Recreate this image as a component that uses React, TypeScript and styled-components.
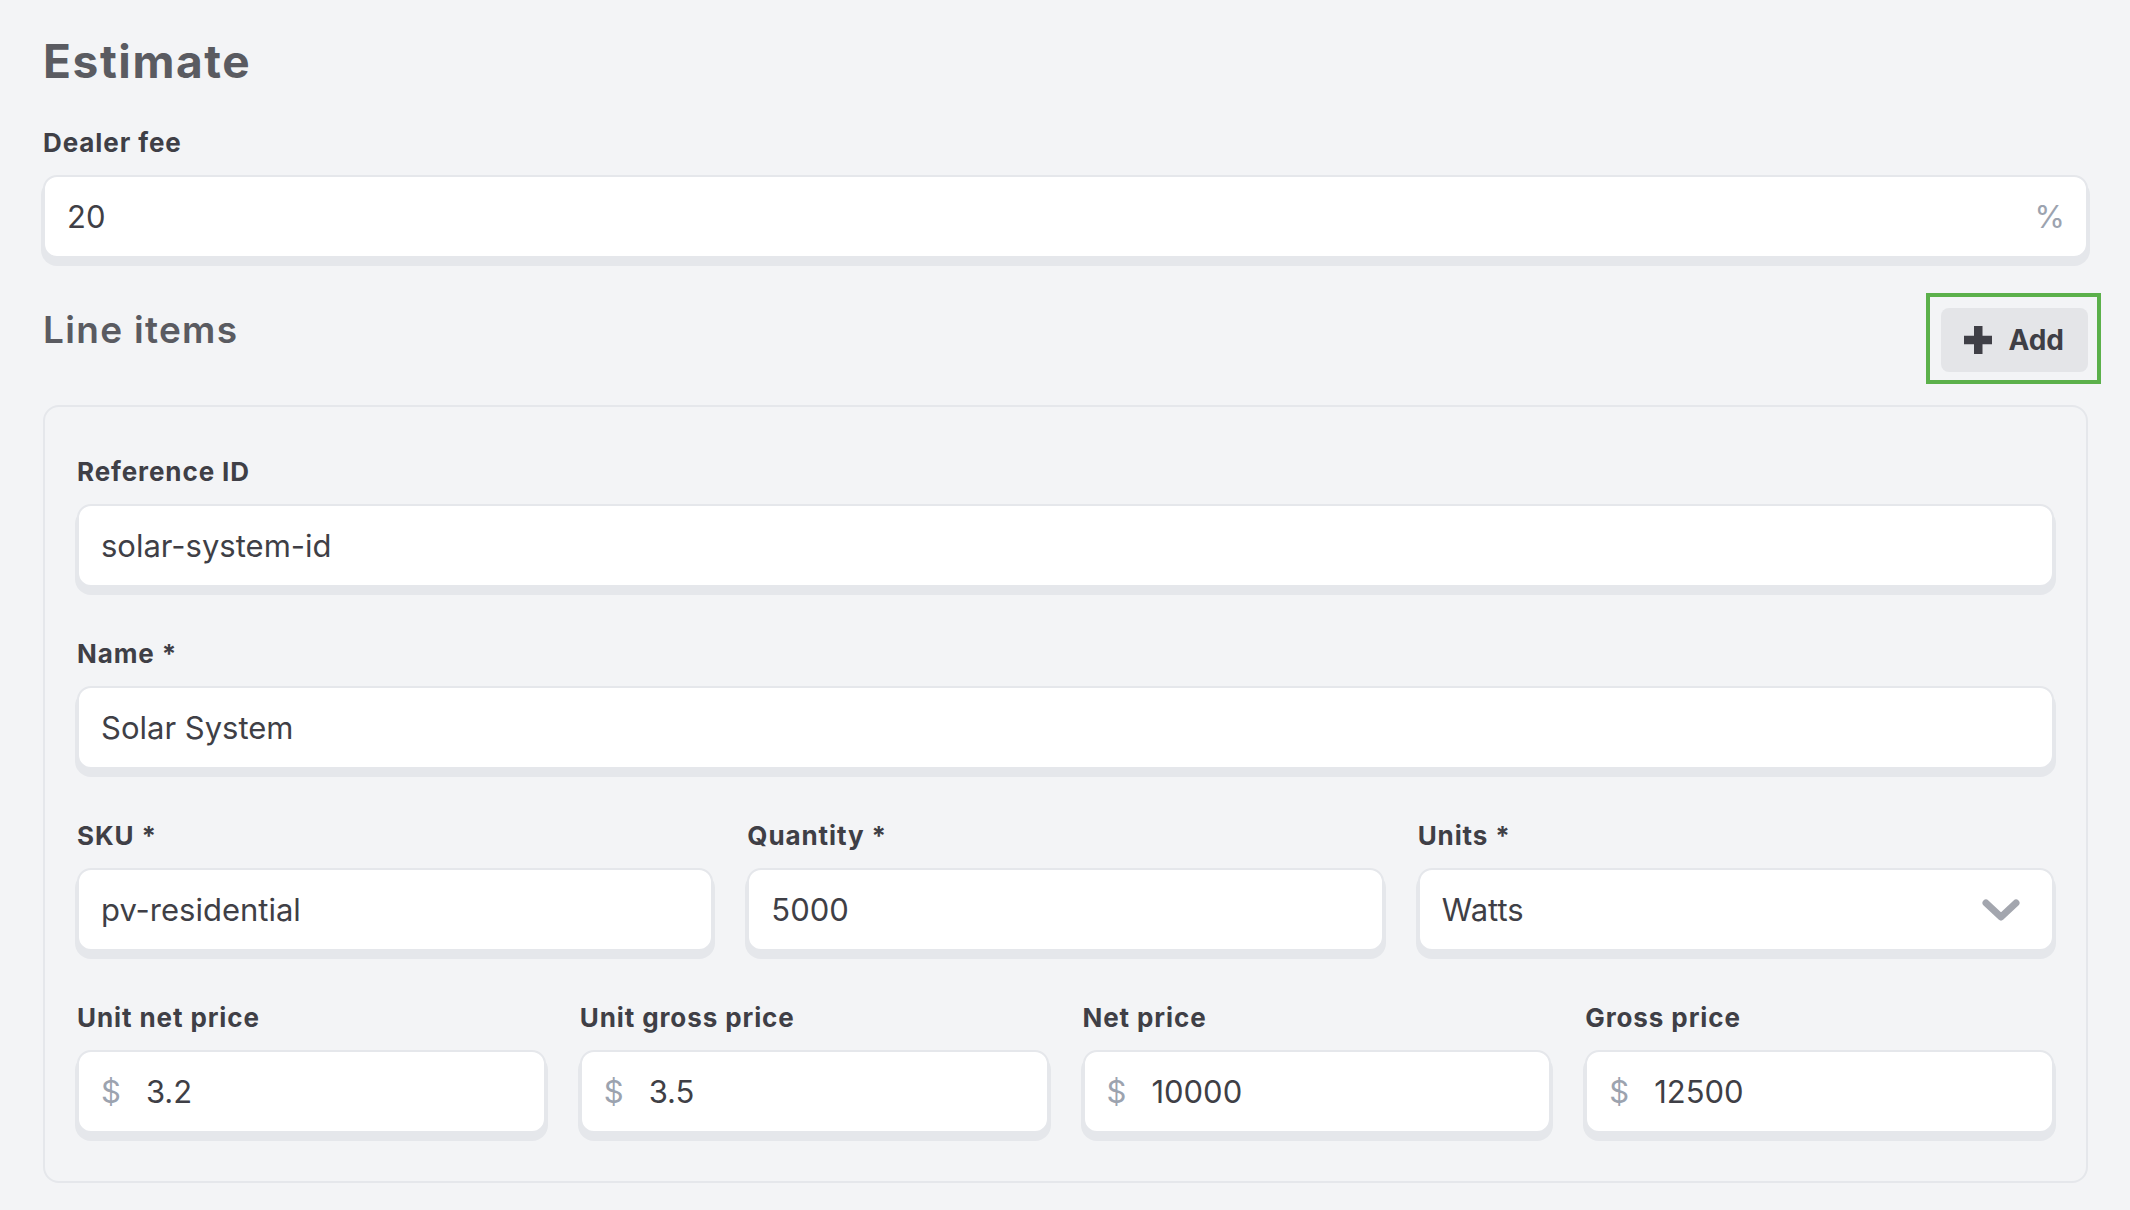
import React from "react";
import styled, { createGlobalStyle } from "styled-components";

const Global = createGlobalStyle`
  html, body { margin: 0; padding: 0; background: #f3f4f6; }
  body { font-family: Inter, "Noto Sans", sans-serif; color: #3f3f46; }
  *, *::before, *::after { box-sizing: border-box; }
`;

const Page = styled.main`
  padding: 33px 42px 0 43px;
  min-height: 1210px;
  display: flex;
  flex-direction: column;
`;

const Title = styled.h1`
  margin: 0;
  font-size: 46px;
  line-height: 56px;
  font-weight: 700;
  letter-spacing: 1.6px;
  color: #5a5b61;
`;

const Field = styled.div<{ $top?: number }>`
  display: flex;
  flex-direction: column;
  gap: 13px;
  min-width: 0;
  margin-top: ${(p) => p.$top ?? 0}px;
`;

const Label = styled.label`
  font-size: 26px;
  line-height: 39px;
  font-weight: 700;
  letter-spacing: 0.9px;
  color: #3f3f46;
`;

const Shell = styled.div<{ $padRight?: number }>`
  display: flex;
  align-items: center;
  height: 83px;
  padding: 0 ${(p) => p.$padRight ?? 21}px 0 22px;
  background: #ffffff;
  border: 2px solid #e5e7eb;
  border-radius: 14px;
  box-shadow: 0 6px 0 2px #e5e7eb;
`;

const Value = styled.input`
  flex: 1;
  min-width: 0;
  border: 0;
  outline: none;
  background: transparent;
  padding: 0;
  font-family: Inter, "Noto Sans", sans-serif;
  font-size: 31px;
  font-weight: 400;
  color: #3f3f46;
`;

const SelectText = styled.span`
  flex: 1;
  font-size: 31px;
  font-weight: 400;
  color: #3f3f46;
`;

const Affix = styled.span<{ $side: "left" | "right" }>`
  font-size: 31px;
  color: #9ca3af;
  margin-right: ${(p) => (p.$side === "left" ? 25 : 0)}px;
  margin-left: ${(p) => (p.$side === "right" ? 12 : 0)}px;
`;

const HeaderRow = styled.div`
  display: flex;
  justify-content: space-between;
  align-items: flex-start;
  margin-top: 50px;
`;

const Heading = styled.h2`
  margin: 0;
  font-size: 37px;
  line-height: 44px;
  font-weight: 600;
  letter-spacing: 1.3px;
  color: #5a5b61;
`;

const AddButton = styled.button`
  position: relative;
  display: flex;
  align-items: center;
  gap: 16px;
  height: 64px;
  padding: 0 24px 0 23px;
  border: 0;
  border-radius: 8px;
  background: #e4e5e8;
  color: #3f3f46;
  font-family: Inter, "Noto Sans", sans-serif;
  font-size: 28px;
  font-weight: 700;
  outline: none;
  cursor: pointer;

  &::after {
    content: "";
    position: absolute;
    inset: -15px -13px -12px -15px;
    border: 4px solid #5bb04b;
    pointer-events: none;
  }
`;

const Card = styled.section`
  margin-top: 33px;
  border: 2px solid #e5e7eb;
  border-radius: 16px;
  padding: 45px 32px 48px;
  display: flex;
  flex-direction: column;
  gap: 47px;
`;

const Grid = styled.div<{ $cols: number }>`
  display: grid;
  grid-template-columns: repeat(${(p) => p.$cols}, minmax(0, 1fr));
  column-gap: 34px;
`;

const PlusIcon = () => (
  <svg width="28" height="28" viewBox="0 0 28 28" aria-hidden="true">
    <rect x="10" y="0" width="8.5" height="28" fill="#3f3f46" />
    <rect x="0" y="9.75" width="28" height="8.5" fill="#3f3f46" />
  </svg>
);

const Chevron = () => (
  <svg width="38" height="22" viewBox="0 0 38 22" aria-hidden="true">
    <path
      d="M4 4 L19 18 L34 4"
      fill="none"
      stroke="#a3a6ae"
      strokeWidth="7"
      strokeLinecap="round"
      strokeLinejoin="round"
    />
  </svg>
);

const TextField = ({ label, value }: { label: string; value: string }) => (
  <Field>
    <Label>{label}</Label>
    <Shell>
      <Value defaultValue={value} />
    </Shell>
  </Field>
);

const PriceField = ({ label, value }: { label: string; value: string }) => (
  <Field>
    <Label>{label}</Label>
    <Shell>
      <Affix $side="left">$</Affix>
      <Value defaultValue={value} />
    </Shell>
  </Field>
);

export default function App() {
  return (
    <>
      <Global />
      <Page>
        <Title>Estimate</Title>
        <Field $top={34}>
          <Label>Dealer fee</Label>
          <Shell>
            <Value defaultValue="20" />
            <Affix $side="right">%</Affix>
          </Shell>
        </Field>
        <HeaderRow>
          <Heading>Line items</Heading>
          <AddButton type="button">
            <PlusIcon />
            Add
          </AddButton>
        </HeaderRow>
        <Card>
          <TextField label="Reference ID" value="solar-system-id" />
          <TextField label="Name *" value="Solar System" />
          <Grid $cols={3}>
            <TextField label="SKU *" value="pv-residential" />
            <TextField label="Quantity *" value="5000" />
            <Field>
              <Label>Units *</Label>
              <Shell $padRight={32}>
                <SelectText>Watts</SelectText>
                <Chevron />
              </Shell>
            </Field>
          </Grid>
          <Grid $cols={4}>
            <PriceField label="Unit net price" value="3.2" />
            <PriceField label="Unit gross price" value="3.5" />
            <PriceField label="Net price" value="10000" />
            <PriceField label="Gross price" value="12500" />
          </Grid>
        </Card>
      </Page>
    </>
  );
}
